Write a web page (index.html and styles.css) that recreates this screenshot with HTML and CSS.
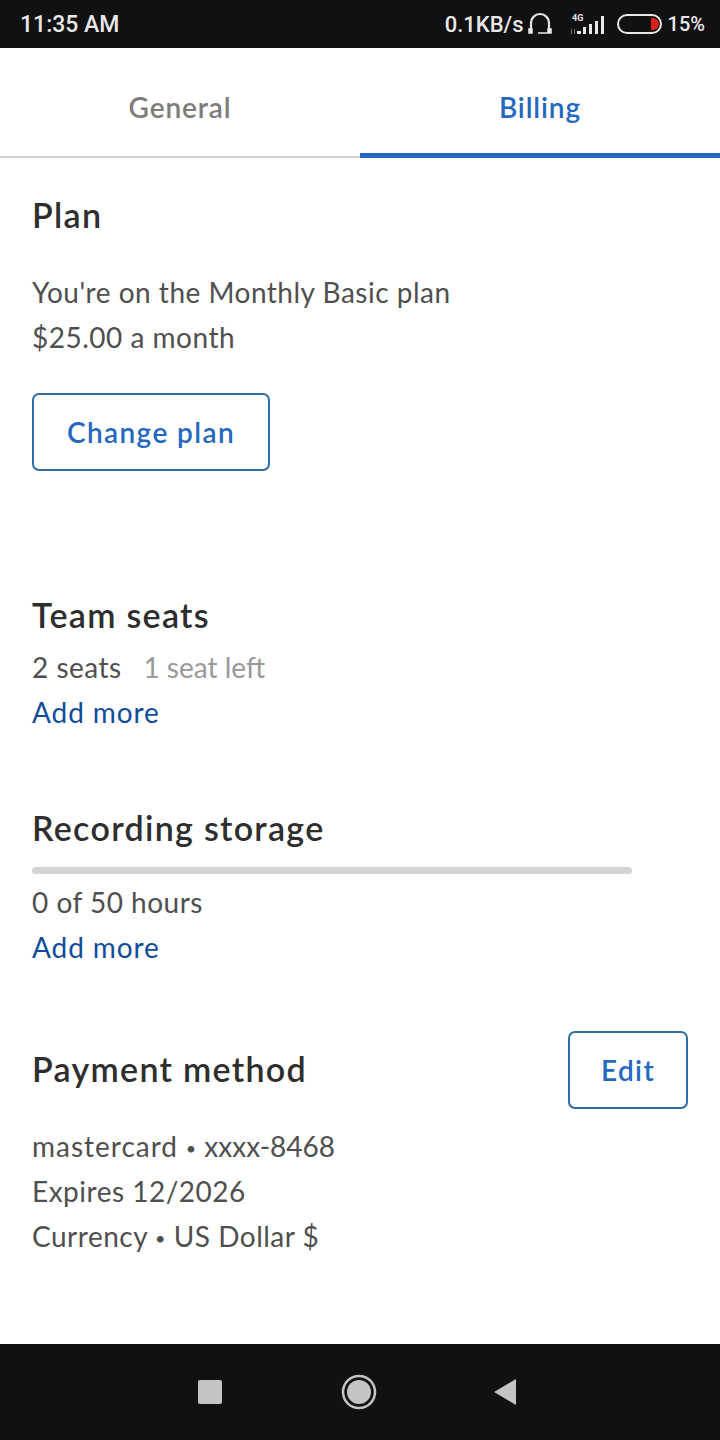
FILE: index.html
```html
<!DOCTYPE html>
<html lang="en">
<head>
    <meta charset="UTF-8">
    <meta name="viewport" content="width=device-width, initial-scale=1.0">
    <title>Billing</title>
    <link rel="stylesheet" href="styles.css">
</head>
<body>
    <!-- Status bar -->
    <div class="status-bar">
        <span class="clock">11:35 AM</span>
        <div class="status-right">
            <span class="speed">0.1KB/s</span>
            <svg class="icon-headset" width="26" height="24" viewBox="0 0 26 24" fill="none">
                <path d="M4 18V11a9 9 0 0 1 18 0v7" stroke="#e8e8e8" stroke-width="2.2"/>
                <path d="M2 17h3v4H2zM21 17h3v4h-3zM11 21h11" stroke="#e8e8e8" stroke-width="1.6" fill="#e8e8e8"/>
            </svg>
            <svg class="icon-signal" width="40" height="24" viewBox="0 0 40 24">
                <text x="1" y="9" class="net-label">4G</text>
                <path d="M0 17h1v5H0zM3 17h1v5H3z" fill="#777"/>
                <path d="M6 19h4v3H6zM12 15h3v7h-3zM18 12h3v10h-3zM24 9h3v13h-3zM30 4h3v18h-3z" fill="#e8e8e8"/>
            </svg>
            <svg class="icon-battery" width="46" height="22" viewBox="0 0 46 22" fill="none">
                <rect x="1" y="2" width="43" height="18" rx="9" stroke="#e8e8e8" stroke-width="2"/>
                <path d="M34 5h2a6 6 0 0 1 0 12h-2z" fill="#d8201c"/>
            </svg>
            <span class="battery-pct">15%</span>
        </div>
    </div>

    <!-- Tabs -->
    <div class="tabs">
        <div class="tab">General</div>
        <div class="tab tab-active">Billing</div>
    </div>

    <main class="content">
        <section class="plan">
            <h2>Plan</h2>
            <p class="first-line">You're on the Monthly Basic plan</p>
            <p>$25.00 a month</p>
            <button class="btn btn-plan">Change plan</button>
        </section>

        <section class="seats">
            <h2>Team seats</h2>
            <p class="seat-line">2 seats <span class="muted">1 seat left</span></p>
            <a class="link" href="#">Add more</a>
        </section>

        <section class="storage">
            <h2>Recording storage</h2>
            <div class="progress"></div>
            <p>0 of 50 hours</p>
            <a class="link" href="#">Add more</a>
        </section>

        <section class="payment">
            <div class="payment-head">
                <h2>Payment method</h2>
                <button class="btn btn-edit">Edit</button>
            </div>
            <p><span class="card-brand">mastercard</span> <span class="dot">•</span> <span class="card-num">xxxx-8468</span></p>
            <p>Expires 12/2026</p>
            <p>Currency <span class="dot">•</span> US Dollar $</p>
        </section>
    </main>

    <!-- Android nav bar -->
    <div class="nav-bar">
        <span class="nav-square"></span>
        <svg class="nav-home" width="36" height="36" viewBox="0 0 36 36" fill="none">
            <circle cx="18" cy="18" r="16" stroke="#c4c4c4" stroke-width="2.5"/>
            <circle cx="18" cy="18" r="12" fill="#c4c4c4"/>
        </svg>
        <svg class="nav-back" width="24" height="28" viewBox="0 0 24 28">
            <path d="M1 14 23 1v26z" fill="#c4c4c4"/>
        </svg>
    </div>
</body>
</html>
```

FILE: styles.css
```css
* {
    box-sizing: border-box;
}

html, body {
    margin: 0;
    padding: 0;
}

body {
    width: 720px;
    height: 1440px;
    display: flex;
    flex-direction: column;
    background: white;
    font-family: Lato, "Noto Sans", sans-serif;
    color: #4f4f4f;
    overflow: hidden;
}

/* Status bar */
.status-bar {
    height: 48px;
    flex: none;
    background-color: #111;
    color: #e8e8e8;
    font-family: Roboto, sans-serif;
    font-weight: 500;
    display: flex;
    justify-content: space-between;
    align-items: center;
    padding: 0 15px 0 20px;
}

.clock {
    font-size: 23px;
}

.status-right {
    display: flex;
    align-items: center;
}

.speed {
    font-size: 22px;
}

.icon-headset {
    margin-left: 3px;
}

.icon-signal {
    margin-left: 18px;
}

.net-label {
    font-size: 9px;
    font-weight: 700;
    fill: #e8e8e8;
}

.icon-battery {
    margin-left: 6px;
}

.battery-pct {
    font-size: 20px;
    margin-left: 5px;
}

/* Tabs */
.tabs {
    height: 110px;
    flex: none;
    display: flex;
    border-bottom: 2px solid #d4d4d4;
}

.tab {
    flex: 1;
    text-align: center;
    font-size: 28px;
    font-weight: 600;
    letter-spacing: 0.9px;
    line-height: 118px;
    color: #7c7c7c;
}

.tab-active {
    color: #2468c0;
    border-bottom: 5px solid #2468c0;
    margin-bottom: -2px;
}

/* Content */
.content {
    flex: 1;
    padding: 0 32px;
}

h2 {
    margin: 0;
    font-size: 34px;
    font-weight: 600;
    line-height: 38px;
    padding-bottom: 2px;
    color: #2e2e2e;
    letter-spacing: 1.3px;
}

p {
    margin: 0;
    font-size: 28px;
    line-height: 45px;
    letter-spacing: 0.5px;
}

.plan {
    padding-top: 38px;
}

.first-line {
    margin-top: 34px;
}

.btn {
    display: block;
    background: white;
    border: 2px solid #2f6da8;
    border-radius: 7px;
    color: #2468c0;
    font-family: inherit;
    font-size: 28px;
    font-weight: 600;
    height: 78px;
    letter-spacing: 1.4px;
}

.btn-plan {
    width: 238px;
    margin-top: 33px;
}

.seats {
    padding-top: 125px;
}

.seat-line {
    margin-top: 9px;
}

.muted {
    color: #999;
    margin-left: 14px;
    letter-spacing: 0;
}

.dot {
    font-size: 18px;
    line-height: 0;
    vertical-align: 2px;
}

.card-brand {
    letter-spacing: 1px;
}

.card-num {
    letter-spacing: 0;
}

.link {
    display: block;
    font-size: 28px;
    line-height: 45px;
    color: #0f4c9c;
    text-decoration: none;
    letter-spacing: 0.9px;
}

.storage {
    padding-top: 74px;
}

.progress {
    width: 600px;
    height: 7px;
    border-radius: 4px;
    background-color: #d4d4d4;
    margin-top: 18px;
    margin-bottom: 6px;
}

.payment {
    padding-top: 61px;
}

.payment-head {
    display: flex;
    justify-content: space-between;
    align-items: center;
    margin-bottom: 15px;
}

.btn-edit {
    width: 120px;
}

/* Nav bar */
.nav-bar {
    height: 96px;
    flex: none;
    background-color: #111;
    display: flex;
    justify-content: center;
    align-items: center;
    padding-right: 5px;
}

.nav-square {
    width: 24px;
    height: 24px;
    background-color: #c4c4c4;
    border-radius: 2px;
    margin-right: 119px;
}

.nav-back {
    margin-left: 116px;
}
```
